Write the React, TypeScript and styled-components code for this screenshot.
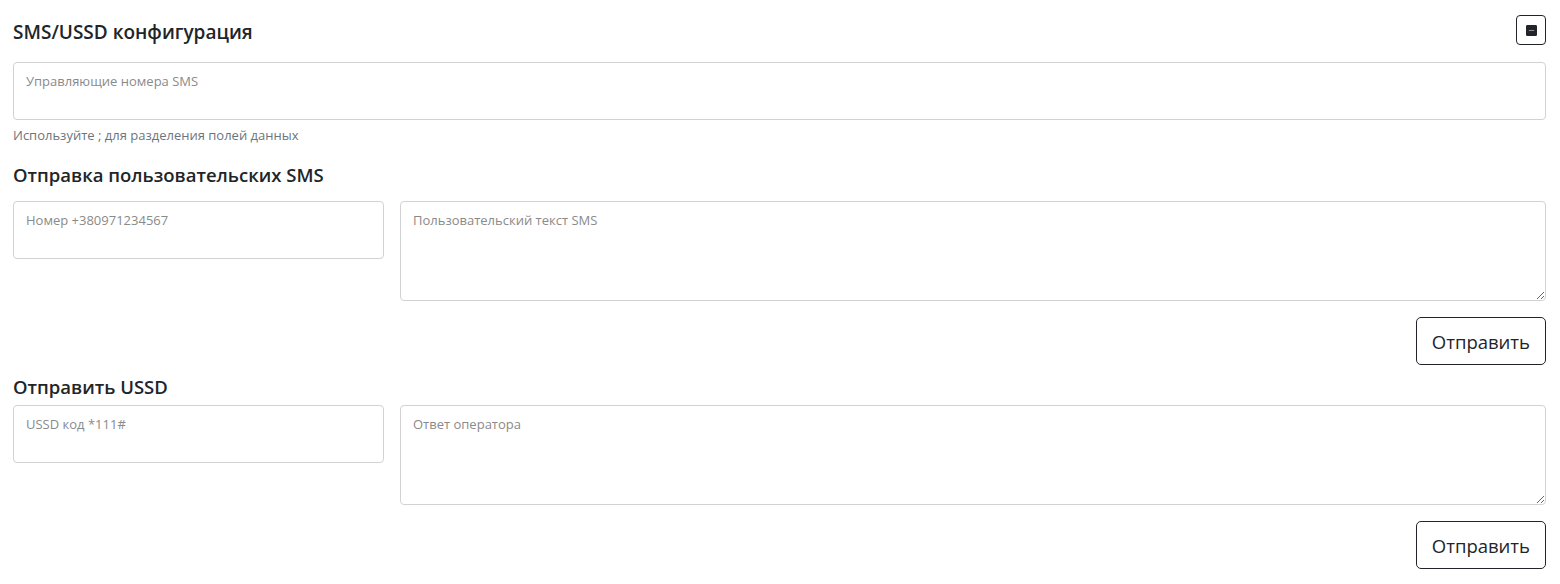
import styled, { createGlobalStyle } from "styled-components";

const GlobalStyle = createGlobalStyle`
  body {
    margin: 0;
    background: #fff;
    font-family: "Open Sans", "Noto Sans", sans-serif;
    color: #212529;
  }
`;

const Page = styled.div`
  padding: 15px 14px 0 13px;
  display: flex;
  flex-direction: column;
`;

const Header = styled.div`
  display: flex;
  justify-content: space-between;
  align-items: center;
  height: 30px;
  margin-bottom: 17px;
  > h3 {
    margin-top: 4px;
    font-size: 19px;
  }
`;

const Title = styled.h3<{ $top?: number }>`
  margin: ${(p) => p.$top ?? 0}px 0 0 0;
  font-size: 18.5px;
  font-weight: 600;
  line-height: 22px;
`;

const IconButton = styled.button`
  width: 30px;
  height: 30px;
  border: 1px solid #212529;
  border-radius: 4px;
  background: #fff;
  display: flex;
  align-items: center;
  justify-content: center;
  padding: 0;
  cursor: pointer;
`;

const Field = styled.textarea<{ $h: number; $resize?: boolean }>`
  box-sizing: border-box;
  width: 100%;
  height: ${(p) => p.$h}px;
  border: 1px solid #d2d2d2;
  border-radius: 4px;
  padding: 9px 12px;
  font-family: "Open Sans", "Noto Sans", sans-serif;
  font-size: 13px;
  line-height: 18px;
  color: #212529;
  resize: ${(p) => (p.$resize ? "vertical" : "none")};
  outline: none;
  display: block;
  &::placeholder {
    color: #8a8a8a;
  }
`;

const Help = styled.div`
  margin-top: 7px;
  font-size: 13px;
  line-height: 17px;
  color: #6c757d;
`;

const Row = styled.div<{ $top: number }>`
  display: grid;
  grid-template-columns: 371px 1fr;
  gap: 16px;
  align-items: start;
  margin-top: ${(p) => p.$top}px;
`;

const Actions = styled.div`
  display: flex;
  justify-content: flex-end;
  margin-top: 16px;
`;

const SendButton = styled.button`
  box-sizing: border-box;
  height: 48px;
  padding: 0 15px;
  border: 1px solid #212529;
  border-radius: 5px;
  background: #fff;
  color: #212529;
  font-family: "Open Sans", "Noto Sans", sans-serif;
  font-size: 18.5px;
  cursor: pointer;
`;

function DashSquare() {
  return (
    <svg width="11" height="11" viewBox="0 0 16 16" fill="#212529">
      <path d="M2 0a2 2 0 0 0-2 2v12a2 2 0 0 0 2 2h12a2 2 0 0 0 2-2V2a2 2 0 0 0-2-2H2zm2.5 7.5h7a.5.5 0 0 1 0 1h-7a.5.5 0 0 1 0-1z" />
    </svg>
  );
}

export default function App() {
  return (
    <Page>
      <GlobalStyle />
      <Header>
        <Title>SMS/USSD конфигурация</Title>
        <IconButton aria-label="collapse">
          <DashSquare />
        </IconButton>
      </Header>
      <Field $h={58} placeholder="Управляющие номера SMS" />
      <Help>Используйте ; для разделения полей данных</Help>

      <Title $top={20}>Отправка пользовательских SMS</Title>
      <Row $top={15}>
        <Field $h={58} placeholder="Номер +380971234567" />
        <Field $h={100} $resize placeholder="Пользовательский текст SMS" />
      </Row>
      <Actions>
        <SendButton>Отправить</SendButton>
      </Actions>

      <Title $top={11}>Отправить USSD</Title>
      <Row $top={7}>
        <Field $h={58} placeholder="USSD код *111#" />
        <Field $h={100} $resize placeholder="Ответ оператора" />
      </Row>
      <Actions>
        <SendButton>Отправить</SendButton>
      </Actions>
    </Page>
  );
}
